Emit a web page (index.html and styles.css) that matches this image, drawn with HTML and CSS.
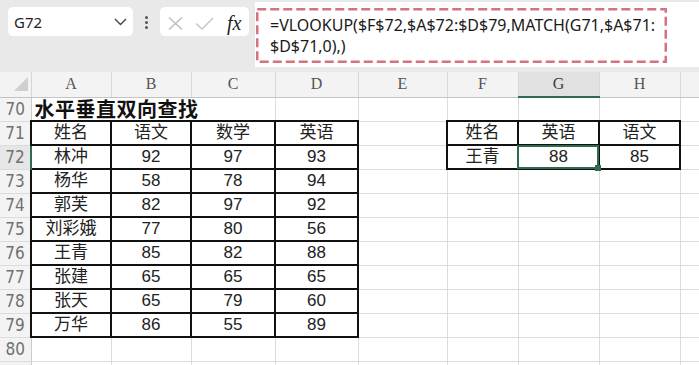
FILE: index.html
```html
<!DOCTYPE html>
<html lang="zh-CN">
<head>
<meta charset="utf-8">
<title>水平垂直双向查找</title>
<link rel="stylesheet" href="styles.css">
</head>
<body>
<div class="toolbar">
  <div class="namebox">
    <span>G72</span>
    <svg width="13" height="8" viewBox="0 0 13 8"><polyline points="1,1 6.5,6.5 12,1" fill="none" stroke="#444" stroke-width="1.4"/></svg>
  </div>
  <div class="dots"><i></i><i></i><i></i></div>
  <div class="fxbox">
    <svg class="xi" width="15" height="13" viewBox="0 0 15 13"><path d="M1 0.5 L14 12.5 M14 0.5 L1 12.5" stroke="#bdbdbd" stroke-width="1.4" fill="none"/></svg>
    <svg class="ck" width="19" height="13" viewBox="0 0 19 13"><polyline points="1,6.5 7,12 18,1" fill="none" stroke="#c4c4c4" stroke-width="1.4"/></svg>
    <span class="fx">fx</span>
  </div>
  <div class="formula">
    <div class="dashbox">
      <svg class="dash" width="411" height="55" viewBox="0 0 411 55"><rect x="1.25" y="1.25" width="408.5" height="52.5" fill="none" stroke="#d6717f" stroke-width="2.5" stroke-dasharray="9 4"/></svg>
      <div class="ftext">=VLOOKUP($F$72,$A$72:$D$79,MATCH(G71,$A$71:<br>$D$71,0),)</div>
    </div>
  </div>
</div>

<table class="sheet">
  <colgroup>
    <col class="w-rh"><col class="w-a"><col class="w-b"><col class="w-c"><col class="w-d"><col class="w-e"><col class="w-f"><col class="w-g"><col class="w-h"><col class="w-i">
  </colgroup>
  <tr class="hdr">
    <th class="corner"><svg class="tri" width="30" height="24" viewBox="0 0 30 24"><polygon points="28,5 28,19 14,19" fill="#cfcfcf"/></svg></th>
    <th class="col">A</th><th class="col">B</th><th class="col">C</th><th class="col">D</th><th class="col">E</th><th class="col">F</th><th class="col on">G</th><th class="col">H</th><th class="col"></th>
  </tr>
  <tr>
    <th class="rh">70</th>
    <td class="title" colspan="3">水平垂直双向查找</td><td></td><td></td><td></td><td></td><td></td><td></td>
  </tr>
  <tr>
    <th class="rh">71</th>
    <td class="b">姓名</td><td class="b">语文</td><td class="b">数学</td><td class="b">英语</td><td></td>
    <td class="b">姓名</td><td class="b">英语</td><td class="b">语文</td><td></td>
  </tr>
  <tr>
    <th class="rh on">72</th>
    <td class="b">林冲</td><td class="b">92</td><td class="b">97</td><td class="b">93</td><td></td>
    <td class="b">王青</td><td class="b sel">88<div class="selbox"><span class="handle"></span></div></td><td class="b">85</td><td></td>
  </tr>
  <tr>
    <th class="rh">73</th>
    <td class="b">杨华</td><td class="b">58</td><td class="b">78</td><td class="b">94</td><td></td><td></td><td></td><td></td><td></td>
  </tr>
  <tr>
    <th class="rh">74</th>
    <td class="b">郭芙</td><td class="b">82</td><td class="b">97</td><td class="b">92</td><td></td><td></td><td></td><td></td><td></td>
  </tr>
  <tr>
    <th class="rh">75</th>
    <td class="b">刘彩娥</td><td class="b">77</td><td class="b">80</td><td class="b">56</td><td></td><td></td><td></td><td></td><td></td>
  </tr>
  <tr>
    <th class="rh">76</th>
    <td class="b">王青</td><td class="b">85</td><td class="b">82</td><td class="b">88</td><td></td><td></td><td></td><td></td><td></td>
  </tr>
  <tr>
    <th class="rh">77</th>
    <td class="b">张建</td><td class="b">65</td><td class="b">65</td><td class="b">65</td><td></td><td></td><td></td><td></td><td></td>
  </tr>
  <tr>
    <th class="rh">78</th>
    <td class="b">张天</td><td class="b">65</td><td class="b">79</td><td class="b">60</td><td></td><td></td><td></td><td></td><td></td>
  </tr>
  <tr>
    <th class="rh">79</th>
    <td class="b">万华</td><td class="b">86</td><td class="b">55</td><td class="b">89</td><td></td><td></td><td></td><td></td><td></td>
  </tr>
  <tr>
    <th class="rh">80</th>
    <td></td><td></td><td></td><td></td><td></td><td></td><td></td><td></td><td></td>
  </tr>
  <tr>
    <th class="rh"></th>
    <td></td><td></td><td></td><td></td><td></td><td></td><td></td><td></td><td></td>
  </tr>
</table>
</body>
</html>
```

FILE: styles.css
```css
* { box-sizing: border-box; }
html, body { margin: 0; padding: 0; }
body {
  width: 699px;
  height: 365px;
  overflow: hidden;
  background: #fff;
  font-family: "Liberation Sans", "Noto Sans CJK SC", sans-serif;
}

/* ---------- formula toolbar ---------- */
.toolbar {
  height: 72px;
  background: #e9e9e9;
  display: flex;
  align-items: flex-start;
  padding-left: 8px;
}
.namebox {
  margin-top: 7px;
  width: 125px;
  height: 29px;
  background: #fff;
  border-radius: 5px;
  display: flex;
  align-items: center;
  justify-content: space-between;
  padding: 0 6px 0 6px;
  font-family: "Noto Sans", sans-serif;
  font-size: 15px;
  color: #1f1f1f;
}
.dots {
  width: 27px;
  margin-top: 16px;
  display: flex;
  flex-direction: column;
  align-items: center;
  gap: 2px;
}
.dots i {
  display: block;
  width: 3px;
  height: 3px;
  background: #555;
  border-radius: 50%;
}
.fxbox {
  margin-top: 7px;
  width: 89px;
  height: 29px;
  background: #fff;
  border-radius: 5px;
  display: flex;
  align-items: center;
  padding: 3px 0 0 8px;
}
.xi { margin-right: 12px; }
.ck { margin-right: 13px; }
.fx {
  font-family: "Liberation Serif", serif;
  font-style: italic;
  font-size: 20px;
  color: #222;
  line-height: 1;
}
.formula {
  margin-top: 2px;
  margin-left: 6px;
  flex: 1;
  height: 65px;
  background: #fff;
  padding: 6px 0 0 1px;
}
.dashbox {
  position: relative;
  width: 411px;
  height: 55px;
  padding: 7px 0 0 14px;
}
.dash { position: absolute; left: 0; top: 0; }
.ftext {
  position: relative;
  font-family: "Noto Sans", sans-serif;
  font-size: 16px;
  line-height: 21px;
  color: #1a1a1a;
  white-space: nowrap;
}

/* ---------- sheet grid ---------- */
.sheet {
  border-collapse: collapse;
  table-layout: fixed;
  width: 720px;
}
.w-rh { width: 31px; }
.w-a { width: 80px; }
.w-b { width: 80px; }
.w-c { width: 84px; }
.w-d { width: 83px; }
.w-e { width: 89px; }
.w-f { width: 71px; }
.w-g { width: 81px; }
.w-h { width: 81px; }
.w-i { width: 40px; }

.sheet tr { height: 24px; }
.sheet tr.hdr { height: 25px; }
.sheet th, .sheet td {
  padding: 0;
  white-space: nowrap;
  overflow: visible;
  line-height: 18px;
}
th.corner {
  background: #f3f3f3;
  border-right: 1px solid #d5d5d5;
  border-bottom: 1px solid #c4c4c4;
}
.tri { display: block; }
th.col {
  background: #f3f3f3;
  border-right: 1px solid #d8d8d8;
  border-bottom: 1px solid #c4c4c4;
  font-family: "Liberation Serif", serif;
  font-weight: normal;
  font-size: 16px;
  color: #555;
}
th.col.on {
  background: #e1e1e1;
  border-bottom: 2px solid #2e6b4c;
  color: #3a3a3a;
}
th.rh {
  background: #f3f3f3;
  border-right: 1px solid #cbcbcb;
  border-bottom: 1px solid #dcdcdc;
  font-family: "Liberation Sans Narrow", "DejaVu Sans Condensed", "Liberation Sans", sans-serif;
  font-weight: normal;
  font-size: 17px;
  color: #707070;
  text-align: center;
}
th.rh.on {
  background: #e6e6e6;
  border-right: 2px solid #2e6b4c;
}
.sheet td {
  border: 1px solid #dcdcdc;
  text-align: center;
  font-family: "Liberation Sans", "Noto Sans CJK SC", sans-serif;
  font-size: 17px;
  color: #222;
}
.sheet td.b { border: 2px solid #111; }
.sheet td.title {
  text-align: left;
  padding-left: 3px;
  font-family: "Noto Sans CJK SC", sans-serif;
  font-weight: bold;
  font-size: 20px;
  letter-spacing: 0.5px;
  color: #111;
}
.sheet td.sel { position: relative; }
.selbox {
  position: absolute;
  left: -2px;
  top: -1px;
  right: -1px;
  bottom: -1px;
  border: 2px solid #2e6b4c;
}
.handle {
  position: absolute;
  right: -4px;
  bottom: -4px;
  width: 6px;
  height: 6px;
  background: #2e6b4c;
}
```
